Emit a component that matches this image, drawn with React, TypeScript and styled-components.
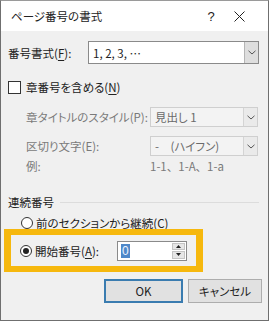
import styled, { createGlobalStyle } from 'styled-components'

const GlobalStyle = createGlobalStyle`
  html, body {
    margin: 0;
    padding: 0;
    background: #ffffff;
  }
  body {
    font-family: "Noto Sans CJK JP", "Noto Sans", sans-serif;
    font-feature-settings: "palt";
    font-size: 11.5px;
    color: #222;
  }
`

const Window = styled.div`
  width: 269px;
  height: 321px;
  box-sizing: border-box;
  border: 1px solid #6f6f6f;
  border-top-color: #9a9a9a;
  display: flex;
  flex-direction: column;
  background: #f0f0f0;
`

const TitleBar = styled.div`
  height: 30px;
  background: #ffffff;
  display: flex;
  align-items: center;
  padding-left: 10px;
`

const Title = styled.div`
  flex: 1;
  font-size: 11.5px;
  color: #222;
`

const TitleButton = styled.div<{ $w: number }>`
  width: ${p => p.$w}px;
  height: 30px;
  display: flex;
  align-items: center;
  justify-content: center;
  font-family: "Liberation Sans", sans-serif;
  font-size: 13px;
  color: #222;
`

const Body = styled.div`
  flex: 1;
  display: flex;
  flex-direction: column;
  padding: 0 9px 0 7px;
`

const Row = styled.div<{ $top: number; $h: number; $indent?: number }>`
  display: flex;
  align-items: center;
  margin-top: ${p => p.$top}px;
  height: ${p => p.$h}px;
  padding-left: ${p => p.$indent || 0}px;
`

const Label = styled.div<{ $w?: number; $disabled?: boolean }>`
  width: ${p => (p.$w ? `${p.$w}px` : 'auto')};
  flex-shrink: 0;
  color: ${p => (p.$disabled ? '#7a7a7a' : '#222')};
  white-space: nowrap;
`

const Example = styled(Label)`
  font-feature-settings: normal;
`

const U = styled.span`
  text-decoration: underline;
  text-underline-offset: 2px;
`

const Combo = styled.div<{ $w: number; $h: number; $disabled?: boolean }>`
  width: ${p => p.$w}px;
  height: ${p => p.$h}px;
  box-sizing: border-box;
  border: 1px solid ${p => (p.$disabled ? '#cfcfcf' : '#8a8a8a')};
  background: ${p => (p.$disabled ? '#f3f3f3' : '#ffffff')};
  display: flex;
  align-items: stretch;
`

const ComboText = styled.div<{ $disabled?: boolean }>`
  flex: 1;
  display: flex;
  align-items: center;
  padding-left: 4px;
  color: ${p => (p.$disabled ? '#6a6a6a' : '#222')};
  white-space: nowrap;
`

const DropButton = styled.div<{ $disabled?: boolean }>`
  width: 13px;
  border-left: 1px solid ${p => (p.$disabled ? '#d4d4d4' : '#b5b5b5')};
  background: ${p => (p.$disabled ? '#eaeaea' : '#dedede')};
  display: flex;
  align-items: center;
  justify-content: center;
`

const CheckBox = styled.div`
  width: 13px;
  height: 13px;
  box-sizing: border-box;
  border: 1px solid #333;
  background: #fff;
  margin-right: 5px;
`

const Radio = styled.div<{ $checked?: boolean }>`
  width: 12px;
  height: 12px;
  box-sizing: border-box;
  border: 1px solid #333;
  border-radius: 50%;
  background: #fff;
  margin-right: 3px;
  display: flex;
  align-items: center;
  justify-content: center;
  &::after {
    content: '';
    display: ${p => (p.$checked ? 'block' : 'none')};
    width: 6px;
    height: 6px;
    border-radius: 50%;
    background: #222;
  }
`

const GroupLine = styled.div`
  flex: 1;
  height: 1px;
  background: #dcdcdc;
  margin-left: 6px;
`

const Highlight = styled.div`
  margin: 0 0 0 -4px;
  width: 199px;
  height: 43px;
  box-sizing: border-box;
  border: solid #f6b80e;
  border-width: 6px 7px;
  display: flex;
  align-items: center;
  padding-left: 9px;
`

const SpinBox = styled.div`
  width: 70px;
  height: 20px;
  box-sizing: border-box;
  border: 1px solid #8a8a8a;
  background: #fff;
  display: flex;
  flex-shrink: 0;
`

const SpinText = styled.div`
  flex: 1;
  display: flex;
  align-items: center;
  padding-left: 3px;
`

const Selected = styled.span`
  background: #4e88c9;
  color: #eef4ff;
  font-family: "Liberation Sans", sans-serif;
  font-size: 12px;
  line-height: 14px;
  padding: 0 1px;
`

const SpinButtons = styled.div`
  width: 13px;
  display: flex;
  flex-direction: column;
  gap: 1px;
  padding: 1px 1px 1px 0;
`

const SpinButton = styled.div`
  flex: 1;
  background: #e6e6e6;
  border: 1px solid #c4c4c4;
  display: flex;
  align-items: center;
  justify-content: center;
`

const ButtonRow = styled.div`
  display: flex;
  justify-content: flex-end;
  gap: 5px;
  margin-top: 7px;
  margin-right: -3px;
`

const Button = styled.div<{ $default?: boolean; $w: number }>`
  width: ${p => p.$w}px;
  height: 24px;
  box-sizing: border-box;
  border: ${p => (p.$default ? '2px solid #3a7cb0' : '1px solid #adadad')};
  background: #e1e1e1;
  display: flex;
  align-items: center;
  justify-content: center;
  color: #222;
`

const Chevron = () => (
  <svg width="8" height="5" viewBox="0 0 8 5">
    <path d="M0.5 0.8 L4 4 L7.5 0.8" fill="none" stroke="#555" strokeWidth="1" />
  </svg>
)

const Tri = ({ up }: { up?: boolean }) => (
  <svg width="5" height="3" viewBox="0 0 5 3">
    <path d={up ? 'M0 3 L2.5 0 L5 3 Z' : 'M0 0 L2.5 3 L5 0 Z'} fill="#222" />
  </svg>
)

export default function App() {
  return (
    <>
      <GlobalStyle />
      <Window>
        <TitleBar>
          <Title>ページ番号の書式</Title>
          <TitleButton $w={20}>?</TitleButton>
          <TitleButton $w={36}>
            <svg width="11" height="11" viewBox="0 0 11 11">
              <path d="M0.5 0.5 L10.5 10.5 M10.5 0.5 L0.5 10.5" stroke="#222" strokeWidth="1" />
            </svg>
          </TitleButton>
          <TitleButton $w={11} />
        </TitleBar>
        <Body>
          <Row $top={10} $h={23}>
            <Label $w={80}>
              番号書式(<U>F</U>):
            </Label>
            <Combo $w={171} $h={23}>
              <ComboText>1, 2, 3, ⋯</ComboText>
              <DropButton>
                <Chevron />
              </DropButton>
            </Combo>
          </Row>

          <Row $top={15} $h={16}>
            <CheckBox />
            <Label>
              章番号を含める(<U>N</U>)
            </Label>
          </Row>

          <Row $top={12} $h={20} $indent={18}>
            <Label $w={124} $disabled>
              章タイトルのスタイル(P):
            </Label>
            <Combo $w={108} $h={20} $disabled>
              <ComboText $disabled>見出し 1</ComboText>
              <DropButton $disabled>
                <Chevron />
              </DropButton>
            </Combo>
          </Row>

          <Row $top={9} $h={20} $indent={18}>
            <Label $w={124} $disabled>
              区切り文字(E):
            </Label>
            <Combo $w={108} $h={20} $disabled>
              <ComboText $disabled>-　(ハイフン)</ComboText>
              <DropButton $disabled>
                <Chevron />
              </DropButton>
            </Combo>
          </Row>

          <Row $top={3} $h={14} $indent={18}>
            <Label $w={124} $disabled>
              例:
            </Label>
            <Example $disabled>1-1、1-A、1-a</Example>
          </Row>

          <Row $top={21} $h={16}>
            <Label>連続番号</Label>
            <GroupLine />
          </Row>

          <Row $top={7} $h={12} $indent={13}>
            <Radio />
            <Label>
              前のセクションから継続(<U>C</U>)
            </Label>
          </Row>

          <Highlight>
            <Radio $checked />
            <Label $w={82}>
              開始番号(<U>A</U>):
            </Label>
            <SpinBox>
              <SpinText>
                <Selected>0</Selected>
              </SpinText>
              <SpinButtons>
                <SpinButton>
                  <Tri up />
                </SpinButton>
                <SpinButton>
                  <Tri />
                </SpinButton>
              </SpinButtons>
            </SpinBox>
          </Highlight>

          <ButtonRow>
            <Button $default $w={79}>
              OK
            </Button>
            <Button $w={74}>キャンセル</Button>
          </ButtonRow>
        </Body>
      </Window>
    </>
  )
}
